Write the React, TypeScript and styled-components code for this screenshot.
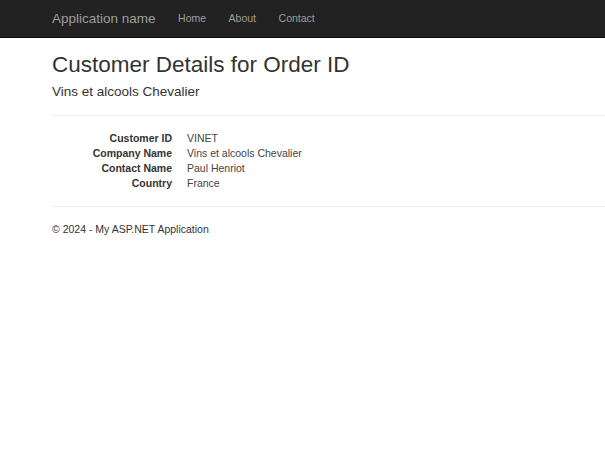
import { Fragment } from "react"
import styled, { createGlobalStyle } from "styled-components"

const GlobalStyle = createGlobalStyle`
  html, body {
    margin: 0;
    padding: 0;
    background: #fff;
  }
  body {
    font-family: "Liberation Sans", Arial, Helvetica, sans-serif;
    font-size: 10.5px;
    line-height: 15px;
    color: #333;
  }
`

const Navbar = styled.nav`
  height: 37.5px;
  background-color: #222;
  border-bottom: 1px solid #080808;
  box-sizing: border-box;
  display: flex;
  align-items: center;
  padding-left: 40.75px;
`

const Brand = styled.a`
  font-size: 13.5px;
  line-height: 15px;
  color: #9d9d9d;
  padding: 0 11.25px;
  text-decoration: none;
`

const NavLink = styled.a`
  font-size: 10.5px;
  color: #9d9d9d;
  padding: 0 11.25px;
  text-decoration: none;
`

const Body = styled.div`
  padding: 0 0 0 52px;
`

const Title = styled.h2`
  font-size: 22.5px;
  font-weight: 500;
  line-height: 1.1;
  margin: 15px 0 7.5px;
`

const Subtitle = styled.h4`
  font-size: 13.5px;
  font-weight: 500;
  line-height: 1.1;
  margin: 7.5px 0 0;
`

const Rule = styled.hr`
  border: 0;
  border-top: 1px solid #eee;
  margin: 15px 0;
`

const DetailList = styled.dl`
  margin: 0 0 15px;
  display: grid;
  grid-template-columns: 120px 1fr;
  column-gap: 15px;
`

const Term = styled.dt`
  font-weight: bold;
  text-align: right;
  white-space: nowrap;
`

const Value = styled.dd`
  margin: 0;
  color: #444;
`

const Footer = styled.footer`
  p {
    margin: 0 0 7.5px;
  }
`

const details = [
  ["Customer ID", "VINET"],
  ["Company Name", "Vins et alcools Chevalier"],
  ["Contact Name", "Paul Henriot"],
  ["Country", "France"],
]

export default function App() {
  return (
    <>
      <GlobalStyle />
      <Navbar>
        <Brand href="#">Application name</Brand>
        <NavLink href="#">Home</NavLink>
        <NavLink href="#">About</NavLink>
        <NavLink href="#">Contact</NavLink>
      </Navbar>
      <Body>
        <Title>Customer Details for Order ID</Title>
        <Subtitle>Vins et alcools Chevalier</Subtitle>
        <Rule />
        <DetailList>
          {details.map(([label, value]) => (
            <Fragment key={label}>
              <Term>{label}</Term>
              <Value>{value}</Value>
            </Fragment>
          ))}
        </DetailList>
        <Rule />
        <Footer>
          <p>© 2024 - My ASP.NET Application</p>
        </Footer>
      </Body>
    </>
  )
}
